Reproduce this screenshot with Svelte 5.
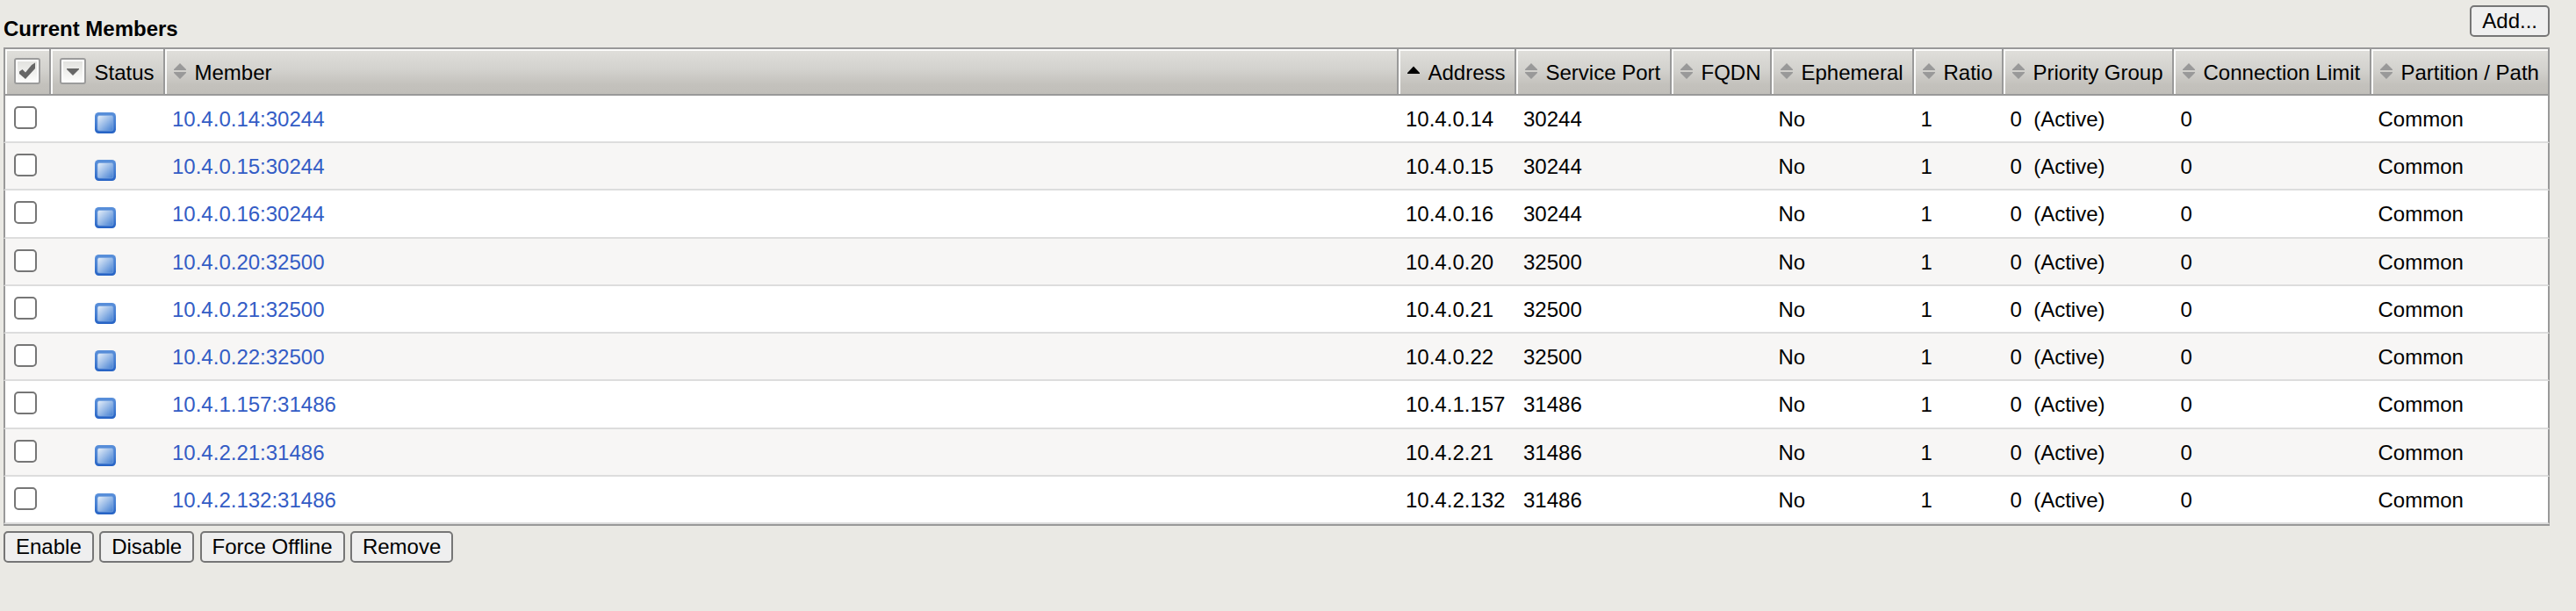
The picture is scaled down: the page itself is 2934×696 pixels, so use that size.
<script>
  const columns = [
    { label: 'Member', sort: 'none' },
    { label: 'Address', sort: 'asc' },
    { label: 'Service Port', sort: 'none' },
    { label: 'FQDN', sort: 'none' },
    { label: 'Ephemeral', sort: 'none' },
    { label: 'Ratio', sort: 'none' },
    { label: 'Priority Group', sort: 'none' },
    { label: 'Connection Limit', sort: 'none' },
    { label: 'Partition / Path', sort: 'none' }
  ];

  const members = [
    ['10.4.0.14', '30244'],
    ['10.4.0.15', '30244'],
    ['10.4.0.16', '30244'],
    ['10.4.0.20', '32500'],
    ['10.4.0.21', '32500'],
    ['10.4.0.22', '32500'],
    ['10.4.1.157', '31486'],
    ['10.4.2.21', '31486'],
    ['10.4.2.132', '31486']
  ].map(([address, port]) => ({ address, port }));

  const actions = ['Enable', 'Disable', 'Force Offline', 'Remove'];
</script>

<main>
  <header class="bar">
    <h1>Current Members</h1>
    <button class="btn">Add...</button>
  </header>

  <div class="table" role="table">
    <div class="row head" role="row">
      <div class="th tool" role="columnheader">
        <svg class="box" viewBox="0 0 30 30" aria-hidden="true">
          <defs>
            <linearGradient id="face" x1="0" y1="0" x2="0" y2="1">
              <stop offset="0" stop-color="#e2e2df" />
              <stop offset="1" stop-color="#fbfbfa" />
            </linearGradient>
          </defs>
          <rect x="1" y="1" width="28" height="28" rx="2" fill="#fff" stroke="#9b9b9b" stroke-width="2" />
          <rect x="4" y="4" width="22" height="22" fill="url(#face)" />
          <path d="M6 15.5 L9.5 13 L13 16.5 L20 8 L24 5.5 L24 12 L13 24 L6 18 Z" fill="#666" />
        </svg>
      </div>
      <div class="th tool" role="columnheader">
        <svg class="box" viewBox="0 0 30 30" aria-hidden="true">
          <rect x="1" y="1" width="28" height="28" rx="2" fill="#fff" stroke="#9b9b9b" stroke-width="2" />
          <rect x="4" y="4" width="22" height="22" fill="url(#face)" />
          <path d="M8 12 H22 V13 L15 20 L8 13 Z" fill="#666" />
        </svg>
        <span>Status</span>
      </div>
      {#each columns as col}
        <div class="th" role="columnheader">
          <svg class="sort" viewBox="0 0 14 18" aria-hidden="true">
            {#if col.sort === 'asc'}
              <path d="M7 3.5 L14 11 V12 H0 V11 Z" fill="#000" />
            {:else}
              <path d="M7 0 L14 7 V8 H0 V7 Z M0 10 H14 V11 L7 18 L0 11 Z" fill="#999" />
            {/if}
          </svg>
          <span>{col.label}</span>
        </div>
      {/each}
    </div>

    {#each members as m}
      <div class="row body" role="row">
        <div class="td pick" role="cell"><input type="checkbox" aria-label={m.address} /></div>
        <div class="td status" role="cell">
          <svg viewBox="0 0 24 24" aria-hidden="true">
            <defs>
              <linearGradient id="rim" x1="0" y1="0" x2="0" y2="1">
                <stop offset="0" stop-color="#5a90da" />
                <stop offset="0.5" stop-color="#447ed2" />
                <stop offset="1" stop-color="#2562c4" />
              </linearGradient>
              <linearGradient id="gem" x1="0" y1="0" x2="1" y2="1">
                <stop offset="0.1" stop-color="#d9e6f6" />
                <stop offset="0.5" stop-color="#98bae7" />
                <stop offset="0.95" stop-color="#4a84d4" />
              </linearGradient>
            </defs>
            <rect x="0" y="0" width="24" height="24" rx="4.5" fill="url(#rim)" />
            <rect x="3" y="3.5" width="18" height="17.5" rx="2" fill="url(#gem)" stroke="#78a4e0" stroke-opacity="0.7" stroke-width="1" />
          </svg>
        </div>
        <div class="td" role="cell"><a href="#member">{m.address}:{m.port}</a></div>
        <div class="td" role="cell">{m.address}</div>
        <div class="td" role="cell">{m.port}</div>
        <div class="td" role="cell"></div>
        <div class="td near" role="cell">No</div>
        <div class="td near" role="cell">1</div>
        <div class="td near" role="cell">0&nbsp; (Active)</div>
        <div class="td near" role="cell">0</div>
        <div class="td near" role="cell">Common</div>
      </div>
    {/each}
  </div>

  <footer class="actions">
    {#each actions as label}
      <button class="btn">{label}</button>
    {/each}
  </footer>
</main>

<style>
  :global(body) {
    margin: 0;
    background: #eae9e4;
  }

  main {
    box-sizing: border-box;
    width: 2904px;
    min-height: 696px;
    padding: 6px 0 0 4px;
    font: 24px/27px 'Liberation Sans', Arial, sans-serif;
    color: #000;
  }

  .bar {
    display: flex;
    justify-content: space-between;
    align-items: flex-start;
    height: 48px;
  }

  h1 {
    margin: 13px 0 0;
    font: bold 24px/27px 'Liberation Sans', Arial, sans-serif;
  }

  .btn {
    box-sizing: border-box;
    height: 36px;
    margin: 0;
    padding: 0 12px 1px;
    border: 2px solid #767676;
    border-radius: 5px;
    background: #efefef;
    font: 24px/27px 'Liberation Sans', Arial, sans-serif;
    color: #000;
  }

  .table {
    border-top: 2px solid #999;
    border-bottom: 2px solid #999;
  }

  .row {
    box-sizing: border-box;
    display: grid;
    grid-template-columns: 52px 130px 1405px 134px 177px 114px 162px 102px 194px 225px 201px;
    border: 0 solid #999;
    border-width: 0 2px 2px;
  }

  .head {
    height: 53px;
  }

  .th {
    display: flex;
    align-items: flex-start;
    gap: 9.5px;
    padding: 13px 0 0 10px;
    border-right: 2px solid #999;
    white-space: nowrap;
    background: linear-gradient(#e0dfdb, #d3d2ce 45%, #c3c1bc 80%, #c1bfba);
    box-shadow: inset 2px 2px 0 #fbfbfa;
  }

  .th:last-child {
    border-right: 0;
  }

  .box {
    flex: none;
    width: 30px;
    height: 30px;
    margin-top: -3px;
  }

  .sort {
    flex: none;
    width: 14px;
    height: 18px;
    margin-top: 3px;
  }

  .body {
    height: 54px;
    background: #fff;
    border-bottom-color: #ddd;
  }

  .body:nth-child(4n) {
    height: 55px;
  }

  .body:nth-child(odd) {
    background: #f7f6f5;
  }

  .td {
    padding: 13px 0 0 8px;
    white-space: nowrap;
  }

  .near {
    padding-left: 7.5px;
  }

  .pick {
    padding: 12px 0 0 10px;
  }

  .pick input {
    appearance: none;
    display: block;
    box-sizing: border-box;
    width: 26px;
    height: 26px;
    margin: 0;
    border: 2px solid #767676;
    border-radius: 5px;
    background: #fff;
  }

  .status {
    padding: 19px 0 0 50px;
  }

  .body:nth-child(4n + 5) .status {
    padding-top: 18px;
  }

  .status svg {
    display: block;
    width: 24px;
    height: 24px;
  }

  a {
    color: #335cc5;
    text-decoration: none;
  }

  .actions {
    display: flex;
    gap: 6.4px;
    padding-top: 6px;
  }
</style>
